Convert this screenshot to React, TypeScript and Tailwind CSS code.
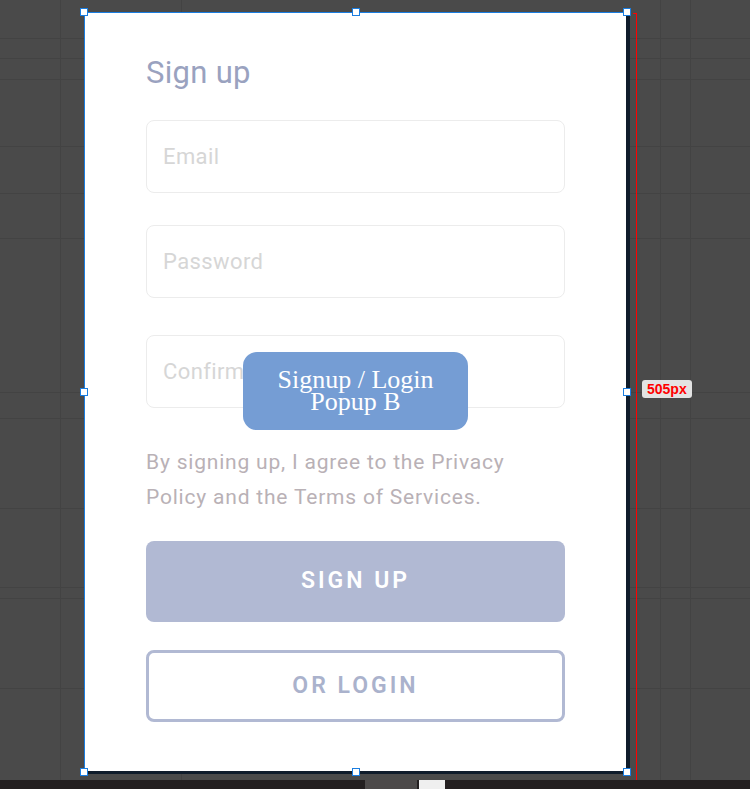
import React from "react";

const hLines = [38, 58, 79, 146, 193, 238, 392, 418, 508, 587, 598, 688];
const vLines = [60, 181, 660, 690];

function Handle({ className }: { className: string }) {
  return <div className={`absolute h-2 w-2 border border-[#1a7de0] bg-white ${className}`} />;
}

function Field({ label, className = "" }: { label: string; className?: string }) {
  return (
    <div className={`flex h-[73px] items-center rounded-lg border border-[#ececec] pl-4 ${className}`}>
      <span className="text-[22px] tracking-[0.4px] text-[#d6d6d6]">{label}</span>
    </div>
  );
}

export default function App() {
  return (
    <div className="relative h-[789px] w-[750px] overflow-hidden bg-[#4a4a4a] font-['Roboto',sans-serif]">
      {/* canvas grid */}
      {hLines.map((y) => (
        <div key={`h${y}`} className="absolute left-0 h-px w-full bg-[#434343]" style={{ top: y }} />
      ))}
      {vLines.map((x) => (
        <div key={`v${x}`} className="absolute top-0 h-full w-px bg-[#434343]" style={{ left: x }} />
      ))}

      {/* artboard */}
      <div className="absolute left-[84px] top-[12px] w-[542px] border-l border-t border-[#1a7de0] bg-white shadow-[4px_3px_0_#0f1c2b]">
        <div className="flex h-[758px] flex-col px-[61px] pt-[42px]">
          <h1 className="text-[31px] leading-[36px] tracking-[0.3px] text-[#9aa2bf]">Sign up</h1>
          <Field label="Email" className="mt-[29px]" />
          <Field label="Password" className="mt-[32px]" />
          <Field label="Confirm Password" className="mt-[37px]" />
          <p className="mt-[37px] text-[21px] leading-[35px] tracking-[0.8px] text-[#b9b1b6]">
            By signing up, I agree to the Privacy Policy and the Terms of Services.
          </p>
          <button className="mt-[26px] h-[81px] rounded-lg bg-[#b1b9d3] text-[23px] font-semibold tracking-[3px] text-white">
            SIGN UP
          </button>
          <button className="mt-[28px] h-[72px] rounded-lg border-[3px] border-[#b1b9d3] text-[23px] font-semibold tracking-[3px] text-[#aab2cc]">
            OR LOGIN
          </button>
        </div>

        {/* component label */}
        <div className="absolute left-[158px] top-[339px] flex h-[78px] w-[225px] flex-col items-center justify-center rounded-[14px] bg-[#759dd4] font-['Liberation_Serif',serif] text-[26px] leading-[22px] text-white">
          <span>Signup / Login</span>
          <span>Popup B</span>
        </div>

        <Handle className="-left-[5px] -top-[5px]" />
        <Handle className="left-[267px] -top-[5px]" />
        <Handle className="-right-[5px] -top-[5px]" />
        <Handle className="-left-[5px] top-[375px]" />
        <Handle className="-right-[5px] top-[375px]" />
        <Handle className="-left-[5px] -bottom-[5px]" />
        <Handle className="left-[267px] -bottom-[5px]" />
        <Handle className="-right-[5px] -bottom-[5px]" />
      </div>

      {/* measurement */}
      <div className="absolute left-[633px] top-[13px] h-px w-[4px] bg-[#ff0000]" />
      <div className="absolute left-[636px] top-[13px] h-[767px] w-px bg-[#ff0000]" />
      <div className="absolute left-[642px] top-[380px] rounded-[3px] bg-[#e3e3e3] px-[5px] font-['Liberation_Sans',sans-serif] text-[14px] font-bold leading-[18px] text-[#ff0000]">
        505px
      </div>

      {/* bottom bar */}
      <div className="absolute bottom-0 left-0 flex h-[9px] w-full bg-[#231f20]">
        <div className="ml-[365px] w-[52px] bg-[#4d4a4a]" />
        <div className="ml-[2px] w-[26px] bg-[#efefef]" />
      </div>
    </div>
  );
}
